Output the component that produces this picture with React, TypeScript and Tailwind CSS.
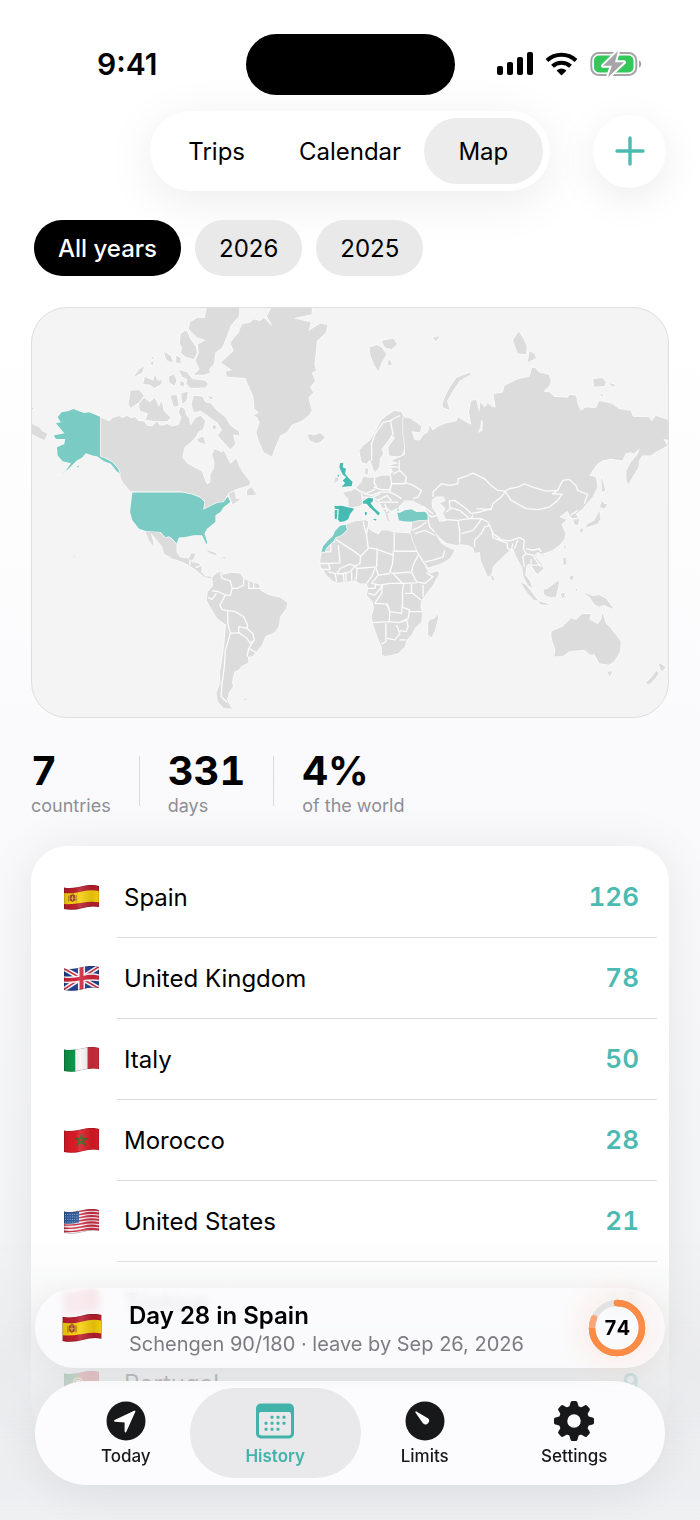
import { Fragment, useId, useState } from 'react'
import type { ReactNode } from 'react'
import clsx from 'clsx'

type Country = { code: string; name: string; days: number }

const countries: Country[] = [
  { code: 'ES', name: 'Spain', days: 126 },
  { code: 'GB', name: 'United Kingdom', days: 78 },
  { code: 'IT', name: 'Italy', days: 50 },
  { code: 'MA', name: 'Morocco', days: 28 },
  { code: 'US', name: 'United States', days: 21 },
  { code: 'TR', name: 'Türkiye', days: 19 },
  { code: 'PT', name: 'Portugal', days: 9 },
]

const stats = [
  { value: '7', label: 'countries' },
  { value: '331', label: 'days' },
  { value: '4%', label: 'of the world' },
]

const views = ['Trips', 'Calendar', 'Map']
const years = ['All years', '2026', '2025']

// One horizontal band of a waving flag
function Band({ y, h, color }: { y: number; h: number; color: string }) {
  return (
    <path
      d={`M-1 ${y + 3} Q8 ${y + 4.5} 18 ${y + 1.8} T36 ${y + 1.5} V${y + h + 1.5} Q28 ${y + h} 18 ${y + h + 1.8} T-1 ${y + h + 3}Z`}
      fill={color}
    />
  )
}

const flagArt: Record<string, ReactNode> = {
  ES: (
    <>
      <Band y={-1} h={24} color="#b81f2c" />
      <Band y={4.8} h={11.2} color="#f7cf0d" />
      <path d="M6 10h5v5.5l-2.5 1.5L6 15.5z" fill="#a8452c" />
      <path d="M7.3 8.4h2.6v1.4H7.3zM4.4 10.5h1v6h-1zM11.6 10.2h1v6h-1z" fill="#9a6a2c" />
      <path d="M8.5 11v4.5M6.7 13.2h3.6" stroke="#e8b94a" strokeWidth=".8" />
    </>
  ),
  GB: (
    <>
      <Band y={-1} h={24} color="#22408f" />
      <path d="M-1 2 36 23M-1 24 36 0" stroke="#fff" strokeWidth="4.6" />
      <path d="M-1 2 36 23M-1 24 36 0" stroke="#cf2840" strokeWidth="1.5" />
      <path d="M17.5 0v25" stroke="#fff" strokeWidth="7" />
      <Band y={7} h={7} color="#fff" />
      <path d="M17.5 0v25" stroke="#d3243c" strokeWidth="4" />
      <Band y={8.5} h={4} color="#d3243c" />
    </>
  ),
  IT: (
    <>
      <path d="M0 0h11.5v25H0z" fill="#10944a" />
      <path d="M11.5 0h12v25h-12z" fill="#f8f8f8" />
      <path d="M23.5 0H36v25H23.5z" fill="#cf2c3c" />
    </>
  ),
  MA: (
    <>
      <Band y={-1} h={24} color="#da1a26" />
      <path d="m17.2 6.8 3.3 9.8-8.6-6h10.600l-8.700 6z" fill="none" stroke="#3d5f21" strokeWidth="1.3" />
    </>
  ),
  US: (
    <>
      <Band y={-1} h={24} color="#f7f3f4" />
      {[-0.8, 2.4, 5.6, 8.8, 12, 15.2, 18.4].map((y) => (
        <Band key={y} y={y} h={1.7} color="#cf2f45" />
      ))}
      <path d="M0 2.5q7 1.5 15-.5v11.500q-8 2-15 1z" fill="#2f5c9c" />
      <path d="M1 5.500h13M1 8h13M1 10.500h13M1 13h13" stroke="#a8c3e3" strokeWidth=".9" strokeDasharray="1 1.3" />
    </>
  ),
  TR: (
    <>
      <Band y={-1} h={24} color="#e2152c" />
      <circle cx="13" cy="12.5" r="5.5" fill="#fff" />
      <circle cx="14.6" cy="12.5" r="4.4" fill="#e2152c" />
      <circle cx="20" cy="12.2" r="1.8" fill="#fff" />
    </>
  ),
  PT: (
    <>
      <path d="M0 0h14v25H0z" fill="#1d7d3c" />
      <path d="M14 0h22v25H14z" fill="#d8242c" />
      <circle cx="14" cy="11.5" r="4.5" fill="none" stroke="#f1d64a" strokeWidth="1.6" />
      <path d="M11.8 9h4.4v3.500L14 14.800l-2.200-2.300z" fill="#f6e9e9" />
    </>
  ),
}

function Flag({ code, className }: { code: string; className: string }) {
  const id = useId()
  return (
    <svg viewBox="0 0 35 25" className={className} aria-hidden="true">
      <defs>
        <clipPath id={`${id}c`}>
          <path d="M0 2.500Q8 4 18 1.300T35 1V22Q27 20.500 18 23.200T0 24Z" />
        </clipPath>
        <linearGradient id={`${id}g`}>
          <stop offset="0" stopColor="#000" stopOpacity=".12" />
          <stop offset=".25" stopColor="#000" stopOpacity="0" />
          <stop offset=".45" stopColor="#fff" stopOpacity=".12" />
          <stop offset=".8" stopColor="#000" stopOpacity=".1" />
          <stop offset="1" stopColor="#000" stopOpacity=".02" />
        </linearGradient>
      </defs>
      <g clipPath={`url(#${id}c)`}>
        {flagArt[code]}
        <path d="M0 0h35v25H0z" fill={`url(#${id}g)`} />
        <path d="M0 2.500Q8 4 18 1.300T35 1V22Q27 20.500 18 23.200T0 24Z" fill="none" stroke="#000" strokeOpacity=".25" />
      </g>
    </svg>
  )
}

// Land is drawn region by region; each group has its own origin
function WorldMap() {
  return (
    <svg viewBox="0 0 1914 1230" className="block w-full" role="img" aria-label="World map of visited countries">
      <g fill="#dcdcdd" stroke="#fbfbfc" strokeWidth="4" strokeLinejoin="round" paintOrder="stroke">
        {/* North America */}
        <g transform="translate(-3 -21)">
          <path d="M208 350 235 362 245 352 265 346 275 352 290 345 300 352 315 350 322 360 340 362 350 375 365 377 380 362 385 372 395 375 410 370 425 378 445 372 452 350 445 335 450 318 462 325 468 345 475 352 480 375 495 352 510 345 524 360 518 385 505 393 495 410 480 425 462 440 455 470 470 488 490 500 515 512 522 535 530 552 540 545 540 520 550 505 552 485 545 462 552 445 575 455 580 450 590 470 600 490 618 475 625 495 640 520 660 545 655 555 620 565 600 575 587 590 590 605 575 608 560 612 545 622 522 630 518 610 505 595 480 584 455 573 300 573 275 545 268 525 245 485 208 468Z" />
          <path d="M325 310 340 290 358 305 372 290 385 318 393 300 400 332 420 350 410 362 375 362 345 357 352 338 328 330Z" />
          <path d="M300 270 325 268 340 285 325 305 300 322 293 310Z" />
          <path d="M310 228 325 205 340 198 335 215ZM338 250 342 228 368 240 372 222 382 240 395 238 392 250 370 262 358 252ZM400 153 420 165 428 185 408 178ZM358 185l12-2-5 12zM362 168l10 2-6 5zM437 165l12 5 2 18-14-3zM415 228l15-8 8 20-6 14-15-8zM450 240l10 5v12l-12-4z" />
          <path d="M445 207 470 215 485 235 525 240 532 250 525 260 480 262 468 250 470 235 455 228Z" />
          <path d="M450 100 462 90 470 92 480 115 495 135 500 155 490 175 465 168 450 155 455 140 448 130Z" />
          <path d="M530 18H627L626 45 600 75 590 105 575 140 555 155 550 190 535 205 540 215 520 222H490L507 205 495 180 505 155 502 130 525 118 500 110 475 85 478 65 500 50 522 52Z" />
          <path d="M490 285 515 287 525 305 540 308 560 330 585 350 600 375 625 392 628 405 608 402 615 430 600 447 580 425 562 405 575 388 560 365 545 355 525 340 510 330 490 335 483 310ZM532 285l18 5-10 6z" />
          <path d="M500 415 518 408 526 430 505 425ZM420 285 438 282 445 315 430 318ZM452 278 472 272 468 300 455 310ZM548 372l10 5-4 10-8-5z" />
          <path d="M650 570 663 560 678 582 650 585ZM595 580 612 572 617 595 630 597 607 612Z" />
          <path d="M3 370 25 380 35 392 50 400 40 418 25 412 3 400ZM3 320l6 3-6 5z" />
          <path d="M75 368 90 365 80 350 92 335 110 332 128 325 145 332 160 337 175 335 208 348V468L225 475 245 485 262 505 268 520 258 512 240 490 220 482 200 468 185 465 165 458 155 470 138 480 110 508 85 525 105 510 120 488 95 482 80 465 78 440 100 430 103 415 75 415 68 405 100 398 85 380ZM138 497l8-2-4 7z" fill="#79cbc4" />
        </g>
        {/* Lower 48, Central and South America */}
        <g transform="translate(-3 519)">
          <path d="M345 152 390 155 405 172 415 168 438 190 438 215 450 232 475 235 482 220 495 220 490 235 480 245 505 250 515 258 512 275 525 288 545 290 540 295 520 290 500 272 480 258 455 245 425 235 400 220 395 200 375 175 360 158 368 185 370 200 355 180 345 155Z" />
          <path d="M305 36H455L485 42 510 52 522 65 518 88 545 75 560 68 580 65 592 48 600 65 580 80 570 95 555 105 555 125 530 145 522 160 530 185 528 193 515 165 490 165 465 170 445 172 438 190 425 175 415 168 405 172 390 155 345 152 325 145 305 120 298 95Z" fill="#79cbc4" />
          <path d="M525 208 555 218 560 226 540 220ZM572 230l18 3-8 3zM128 227l6 1-3 4zM640 657l10 0-4 5z" strokeWidth="2" />
          <path d="M545 292 560 278 572 275 577 284 600 278 630 280 640 295 660 305 685 312 692 332 715 345 750 352 772 368 768 385 750 410 745 440 735 455 705 470 695 495 675 520 665 530 652 530 655 548 635 558 625 570 612 575 605 605 608 620 595 640 590 660 600 680 608 687 580 685 562 665 558 640 570 610 568 580 575 540 582 490 587 435 560 415 545 390 528 360 532 335 548 318Z" />
          <path
            d="M570 278 575 295 600 302 605 325 620 325 640 315 640 295M605 325 600 345 585 345 565 335 545 332M585 345 568 375 575 388 592 392 615 395 640 410 652 435 650 445 625 440 625 458 600 460 592 430V392M625 458 650 475 660 490 672 480 668 462 650 445M672 480 655 505 650 530M655 505 678 518M600 460 585 510 582 560 575 610 572 650 590 668M655 305V325H690M670 308V325M532 352 545 358 558 340M478 238V255M495 262 512 256"
            fill="none"
          />
        </g>
        {/* Greenland, Iceland, Svalbard, Scandinavia */}
        <g transform="translate(567 -21)">
          <path d="M75 232 20 228 15 212 35 208 2 185 12 175 40 150 30 125 55 95 65 70 90 65 100 55 120 60 130 50 158 78 140 45 155 18H275V40L220 52 272 65 265 90 300 68 322 72 318 95 290 120 288 150 283 190 288 210 275 215 285 240 270 260 280 275 265 290 275 330 268 342 245 360 215 372 200 395 180 405 165 440 155 468 130 455 115 420 108 395 118 365 110 350 100 345 115 335 102 325 100 290 85 255Z" />
          <path d="M262 403 272 400 280 405 300 397 315 410 300 425 285 428 268 418ZM448 140 470 132 485 140 500 160 485 185 475 212 462 190 452 165ZM485 120 520 112 532 130 515 145 495 140ZM503 180l8-2 5 12-10 5z" />
          <path d="M418 450 425 485 440 490 450 478 458 500 465 515 478 500 480 475 490 460 485 445 505 420 515 403 525 412 505 440 508 465 530 468 545 465 557 440 552 350 545 335 525 330 500 345 485 358 470 385 450 420 430 435Z" />
          <path d="M455 480V430L465 400 490 365 512 360 520 405M512 360 525 352 540 345" fill="none" />
          <path d="M437 502l8 3-2 18-8-5zM345 530H355V542L342 548Z" />
          <path d="M360 488 370 487 368 500 378 505 375 520 388 535 398 545 395 557 365 560 375 548 368 540 378 530 368 522 362 510 358 500ZM352 522l6 2-4 6z" fill="#45bbb1" />
        </g>
        {/* Eurasia */}
        <g transform="translate(1197 -21)">
          <path d="M-80 350-60 352-25 378-30 395-55 392-45 418-30 420-18 402-5 395 0 372 8 390 25 378 50 368 80 362 85 350 110 365 125 372 118 335 125 300 140 297 145 320 155 355 152 380 145 397 158 390 160 365 148 345 152 305 165 320 175 308 190 320 198 320 192 280 220 275 225 255 260 238 280 232 300 228 308 200 318 202 330 215 358 222 365 240 360 255 342 272 362 275 375 288 415 290 420 282 440 285 445 310 455 330 470 320 500 322 510 300 550 310 570 325 605 330 612 348 660 350 668 362 680 345 720 358V418L703 415 715 435 680 455 665 465 640 465 630 480 628 500 610 530 598 552 592 540 592 510 605 485 625 462 632 443 615 460 605 455 590 458 580 480 545 475 520 480 505 490 480 525 500 530 505 560 490 590 470 612 460 625 440 640 450 662 445 675 435 672 432 655 422 648 415 632 390 650 412 658 397 672 408 700 405 717 390 735 370 750 345 758 335 762 325 755 315 765 335 790 342 805 325 822 318 815 308 800 297 790 290 800 288 825 300 840 310 865 295 855 282 830 278 800 268 785 258 765 252 745 235 755 225 765 190 800 185 825 175 830 168 815 155 785 150 755 135 758 130 742 115 735 90 732 80 735 50 728 30 712 15 695 25 715 35 730 55 742 75 750 60 775 35 790-5 803-20 780-45 740-60 700-55 690-52 662-90 660-97 640-60 628-40 632-7 635-20 618-45 605-50 600-75 600-92 618-98 630-115 635-128 640-120 665-128 660-135 635-145 622-152 612-170 595-200 610-215 618-230 620-245 620-245 595-262 578-235 570-218 558-205 545-200 528-180 532-165 532-145 525-118 525-112 508-122 495-95 488-115 480-90 470-75 462-74 440-80 400Z" />
          <path d="M8 600 20 590 40 590 45 600 28 608 45 625 38 640 48 660 30 662 22 640 8 620Z" fill="#f4f4f5" />
          <path
            d="M10 590 10 575 20 565 35 550 60 555 85 550V535L110 527 130 518 165 535 185 555 205 570 228 572 240 565 265 560 285 550 310 560 350 572 385 570 400 540 420 537 440 555 445 570 475 582 465 610M228 572 215 590 190 610 185 628 140 625M228 575 245 600 290 625 325 628 360 620 385 600 398 582 370 580 385 570M58 600 62 625 50 635M58 602 75 600 110 625 125 640 150 635 185 625M62 622 90 630 120 655 140 655M48 658 85 660 118 655M85 660 90 690V730M95 700 130 690 150 665 155 655 125 655 130 645M135 740V720L155 700 165 680 180 675 175 665 155 655M180 675 190 700 215 718 240 722 270 712 285 720M188 700 190 712 230 728M232 725 235 745 245 750 250 730M255 745 265 720M285 720 282 745 290 760 280 770 285 800M290 745 310 750 330 745 335 755M290 760 310 765 320 780 335 800M305 775V795H335M425 645 445 630M432 655 445 655M-7 650 0 680 15 695M-52 690-30 680-10 665M-45 700-15 690 15 705M-15 785 10 780 40 770 45 750M-20 618 10 640M-7 640 5 650 22 645M-7 635V655"
            fill="none"
          />
          <path d="M125 215 122 222 90 240 70 270 52 300 60 328 40 320 38 310 45 290 60 260 80 232 110 220ZM268 92 280 110 292 135 290 160 265 158 250 118ZM300 152l15 5 5 15-25 12zM492 235 520 232 530 245 525 256 495 258ZM540 247l18 5-3 6-12-5zM510 280l12 2-2 5zM10 108l8 2 12-5-12 17z" />
        </g>
        {/* Europe borders, Africa */}
        <g transform="translate(807 399)">
          <path
            d="M160 140 185 155 188 180 190 190M188 152 195 160 220 150 230 140 222 125 225 112M222 140 245 148 270 148 275 130 272 105M275 130 315 130 320 110 300 90 280 100M265 90 280 95M268 78 298 80M298 60V90M275 130 270 155 290 165 305 175M315 125 340 135 365 150 355 170 340 175M195 160 215 165 240 155 270 155M188 170 215 172 240 160M215 172 235 180 262 165M240 185 265 185 295 185M245 205 262 205 275 215 292 205M262 165 275 182M235 180 245 205M255 190 262 215"
            fill="none"
          />
          <path d="M137 253 165 243 195 240 205 243 203 262 215 272 235 282 245 270 260 270 285 277 320 278 332 280 335 295 345 320 355 345 375 375 388 400 415 393 418 400 400 435 380 460 365 480 362 500 368 520 365 545 345 565 335 585 320 600 315 620 295 640 275 645 255 648 247 645 245 620 232 590 220 555 215 530 222 505 218 485 200 465 205 445 200 430 180 430 165 420 140 425 110 428 95 420 80 405 62 380 60 365 65 335 72 320 105 275Z" />
          <path
            d="M68 335H92V308L105 303M115 315 120 368 85 370M108 298 165 335 182 348 205 325 200 285 192 255 190 243M203 262 200 280M205 322 225 325 280 345 280 332M283 277V333H352M280 345 278 370 270 395 280 400 335 395M182 348 180 370 165 378 170 385 230 380 232 325M168 420 172 385M225 385 215 410 200 430M228 382 235 405 270 400M235 405 215 430 240 435 270 430 308 430 280 400M355 345 340 375 335 395 350 425 375 430 400 410 380 398M308 430 350 428M248 432 245 460 225 490 260 492 270 515 305 520 308 490V450L312 432M315 460 340 460 363 480M370 435V470M335 432V460M262 490 270 515 268 545 215 548M268 545 298 548 325 535 330 510 305 500M325 515H366M258 550V605L245 612M262 595 285 600 300 580 290 555M298 548 320 540 325 560 318 575 300 572M298 600 318 600M60 370 85 370 90 388 62 388M85 395 105 400 110 425M110 402 130 400 132 425M130 400 150 395 165 378 150 372 120 385 110 402M138 400V425M155 395V422M200 445H225L228 430M205 460 225 465 245 440"
            fill="none"
          />
          <path d="M385 550 390 540 405 535 413 522 415 535 405 575 395 592 385 585Z" />
          <g fill="#45bbb1">
            <path d="M103 197 125 196 163 205 150 222 145 236 134 243 120 245 114 238 116 207 104 205ZM104 209H112L110 237 104 236Z" />
            <path d="M188 183 205 172 220 174 218 184 212 188 222 202 240 218 235 226 225 215 208 200 200 190 190 190ZM218 236l12-1-2 6zM195 214l6 2-1 9-5-1z" />
          </g>
          <g fill="#79cbc4">
            <path d="M120 256 137 253 141 268 125 284 106 292 101 302 90 312 78 325 74 335 64 334 69 318 82 303 98 288 105 272Z" />
            <path d="M292 217 300 217 315 210 335 207 350 215 375 214 383 222 384 238 355 240 335 244 310 243 297 240ZM292 207l7 1-5 5z" />
          </g>
        </g>
        {/* East Asian islands and Oceania */}
        <g transform="translate(1197 459)">
          <path d="M515 50 522 65 528 90 518 95 517 70ZM518 120 525 130 535 132 525 145 512 140ZM510 150 514 175 505 190 485 197 468 202 474 191 494 181 504 165ZM451 206l11-2-2 11-7 2zM404 260l6-6-3 17zM402 293l9-1v21l-9 0zM419 350l14-4-2 15-8-4zM185 344l7 6 2 10-7 0z" />
          <path d="M272 365 290 375 310 400 326 422 313 420 295 400ZM325 423 345 428 364 434 335 434ZM342 390 355 385 375 370 385 362 390 370 385 385 380 410 365 412 345 405ZM395 400l16-3-7 8 7 9-9-4-3 8zM438 388l6-3-1 8z" />
          <path d="M462 398l15 4L490 408 510 405 530 415 545 435 555 447 540 442 525 435 510 440 495 432 482 412ZM512 406V440M340 285l6-2-2 7z" />
          <path d="M365 520 370 512 400 500 425 475 440 480 458 462 485 462 480 478 505 492 515 480 520 458 530 490 545 505 560 525 575 545 573 575 555 605 540 615 510 610 495 582 485 585 465 570 440 572 420 575 400 588 375 590 378 570 368 540ZM534 635h16l-8 16z" />
          <path d="M690 612l9 2 11 8-11 13-6-8zM649 670 670 650 682 633 689 640 676 660 660 674Z" />
        </g>
      </g>
    </svg>
  )
}

function StatusIcons() {
  return (
    <svg viewBox="0 0 148 28" className="h-7 w-[148px]" aria-hidden="true">
      <rect x="1" y="16" width="6" height="9" rx="2" />
      <rect x="11" y="12" width="6" height="13" rx="2" />
      <rect x="21" y="7" width="6" height="18" rx="2" />
      <rect x="31" y="2" width="6" height="23" rx="2" />
      <g fill="none" stroke="#000" strokeWidth="4">
        <path d="M51 10.500a21 21 0 0 1 29 0" />
        <path d="M56.500 16.300a13 13 0 0 1 18 0" />
      </g>
      <path d="M60.500 20.500a8 8 0 0 1 10 0L65.500 25.500z" />
      <rect x="95.300" y="3" width="45" height="22" rx="7.500" fill="none" stroke="#a5a5a8" strokeWidth="2" />
      <rect x="98" y="5.500" width="39.500" height="17" rx="5" fill="#34c759" />
      <path d="M143 10.500c3 .8 3 6.200 0 7z" fill="#a5a5a8" />
      <path d="M122 1 107 15.800h8.800l-3.800 11.500L128 12.300h-9z" fill="#a5a5a8" stroke="#fff" strokeWidth="4" strokeLinejoin="round" paintOrder="stroke" />
    </svg>
  )
}

function TodayIcon() {
  return (
    <svg viewBox="0 0 40 40" className="size-10" aria-hidden="true">
      <circle cx="20" cy="20" r="19.500" fill="currentColor" />
      <path d="M9 19.800 28.500 10.500 19.500 30.500V20.500z" fill="#fff" stroke="#fff" strokeWidth="1.800" strokeLinejoin="round" />
    </svg>
  )
}

function HistoryIcon() {
  const dots = [[17, 16], [23, 16], [29, 16], [11, 22], [17, 22], [23, 22], [29, 22], [11, 28], [17, 28], [23, 28]]
  return (
    <svg viewBox="0 0 40 40" className="size-10" fill="currentColor" aria-hidden="true">
      <path fillRule="evenodd" d="M6 2.500h28a5 5 0 0 1 5 5v25a5 5 0 0 1-5 5H6a5 5 0 0 1-5-5v-25a5 5 0 0 1 5-5zM6 11a2 2 0 0 0-2 2v19a2.500 2.500 0 0 0 2.500 2.500h27a2.500 2.500 0 0 0 2.500-2.500V13a2 2 0 0 0-2-2z" />
      {dots.map(([x, y]) => (
        <rect key={`${x}-${y}`} x={x - 1.5} y={y - 1.2} width="3" height="3" rx="1" />
      ))}
    </svg>
  )
}

function LimitsIcon() {
  return (
    <svg viewBox="0 0 40 40" className="size-10" aria-hidden="true">
      <circle cx="20" cy="20" r="19.500" fill="currentColor" />
      <path d="M11 11 22.500 17.800a2.800 2.800 0 0 1-4 4z" fill="#fff" stroke="#fff" strokeWidth="1.400" strokeLinejoin="round" />
    </svg>
  )
}

function SettingsIcon() {
  return (
    <svg viewBox="0 0 40 40" className="size-10" fill="currentColor" aria-hidden="true">
      <circle cx="20" cy="20" r="11" fill="none" stroke="currentColor" strokeWidth="8.500" />
      {[0, 45, 90, 135, 180, 225, 270, 315].map((angle) => (
        <path key={angle} d="M15 7 16.500 1.500Q16.800 0 18.200 0h3.600q1.400 0 1.700 1.500L25 7z" transform={`rotate(${angle} 20 20)`} />
      ))}
    </svg>
  )
}

const tabs = [
  { name: 'Today', Icon: TodayIcon },
  { name: 'History', Icon: HistoryIcon },
  { name: 'Limits', Icon: LimitsIcon },
  { name: 'Settings', Icon: SettingsIcon },
]

function LimitRing({ value }: { value: number }) {
  return (
    <div className="grid size-[58px] place-items-center rounded-full shadow-[0_0_28px_10px_rgba(255,140,70,0.1)]">
      <svg viewBox="0 0 58 58" className="col-start-1 row-start-1 size-[58px] -rotate-90" fill="none" strokeWidth="6.500" aria-hidden="true">
        <circle cx="29" cy="29" r="25" stroke="#e4e2e2" />
        <circle cx="29" cy="29" r="25" stroke="#f9a676" strokeLinecap="round" strokeDasharray="127 158" />
        <circle cx="29" cy="29" r="25" stroke="#fb8b45" strokeDasharray="117 158" />
        <circle cx="54" cy="29" r="3.250" fill="#fb8b45" />
      </svg>
      <span className="col-start-1 row-start-1 text-xl font-bold tabular-nums">{value}</span>
    </div>
  )
}

export default function App() {
  const [view, setView] = useState('Map')
  const [year, setYear] = useState('All years')
  const [tab, setTab] = useState('History')

  return (
    <div className="min-h-screen bg-linear-to-b from-white from-20% via-[#fafafc] via-50% to-[#f1f2f4] pb-[86px] font-['Inter','Liberation_Sans',sans-serif] text-black">
      {/* Status bar */}
      <div className="grid h-[111px] grid-cols-[1fr_auto_1fr] items-center px-[56px] pt-[17px]">
        <span className="pl-[41px] text-[30px] font-semibold">9:41</span>
        <div className="h-[61px] w-[209px] rounded-full bg-black" />
        <div className="flex justify-end">
          <StatusIcons />
        </div>
      </div>

      <header className="grid grid-cols-[1fr_auto_1fr] items-center px-[34px]">
        <nav className="col-start-2 grid h-20 w-[400px] grid-cols-3 items-center rounded-full bg-white shadow-[0_10px_50px_rgba(0,0,0,0.08)]">
          {views.map((name) => (
            <button
              key={name}
              type="button"
              onClick={() => setView(name)}
              className={clsx('mx-[7px] h-[66px] rounded-full pt-0.5 text-2xl', view === name && 'bg-[#ececed]')}
            >
              {name}
            </button>
          ))}
        </nav>
        <button
          type="button"
          aria-label="Add trip"
          className="grid size-[73px] place-items-center justify-self-end rounded-full bg-white text-[#4dbab1] shadow-[0_10px_40px_rgba(0,0,0,0.08)]"
        >
          <svg viewBox="0 0 30 30" className="size-[30px]" stroke="currentColor" strokeWidth="3.400" strokeLinecap="round" aria-hidden="true">
            <path d="M15 2v26M2 15h26" />
          </svg>
        </button>
      </header>

      <main className="px-[31px]">
        <div className="mt-[29px] flex gap-[14px] px-[3px]">
          {years.map((name) => (
            <button
              key={name}
              type="button"
              onClick={() => setYear(name)}
              className={clsx('h-14 rounded-full px-6 pt-0.5 text-2xl', year === name ? 'bg-black font-medium text-white' : 'bg-[#e9e9ea]')}
            >
              {name}
            </button>
          ))}
        </div>

        <section className="mt-[31px] overflow-hidden rounded-[36px] border border-[#dededf] bg-[#f4f4f5]">
          <WorldMap />
        </section>

        <dl className="mt-[33px] flex">
          {stats.map((stat, i) => (
            <Fragment key={stat.label}>
              {i > 0 && <div className="mx-7 mt-[5px] h-[50px] w-px bg-[#dadadc]" aria-hidden="true" />}
              <div className="flex flex-col-reverse gap-[3px]">
                <dt className="text-lg leading-6 text-[#8e8e93]">{stat.label}</dt>
                <dd className="text-[40px] leading-10 font-bold tabular-nums">{stat.value}</dd>
              </div>
            </Fragment>
          ))}
        </dl>

        <ul className="mt-[28px] rounded-[36px] bg-white py-[11px] shadow-[0_4px_50px_rgba(0,0,0,0.08)]">
          {countries.map((country, i) => (
            <li key={country.code} className="flex h-[81px] items-center pl-[33px]">
              <Flag code={country.code} className="h-[25px] w-[35px]" />
              <div
                className={clsx(
                  'mr-3 ml-[18px] flex h-full grow items-center justify-between border-b pt-0.5 pr-[18px] pl-[7px] text-2xl',
                  i < countries.length - 1 ? 'border-[#dcdcde]' : 'border-transparent',
                )}
              >
                <span>{country.name}</span>
                <span className="text-[26px] font-semibold text-[#4dbab1] tabular-nums">{country.days}</span>
              </div>
            </li>
          ))}
        </ul>
      </main>

      {/* Floating bars over the list */}
      <div className="fixed inset-x-0 bottom-0 bg-linear-to-b from-transparent via-[#e8e9eb]/80 via-45% to-[#eeeff1]/95 px-[35px] pt-12 pb-[35px]">
        <div className="flex h-20 items-center rounded-full bg-[#fcfcfe]/85 px-[27px] shadow-[0_4px_30px_rgba(0,0,0,0.05)] backdrop-blur-xs">
          <Flag code="ES" className="h-[28px] w-[40px]" />
          <div className="ml-[27px] grow pt-1">
            <h2 className="text-2xl leading-7 font-semibold">Day 28 in Spain</h2>
            <p className="text-xl leading-7 text-[#7c7c80]">Schengen 90/180 · leave by Sep 26, 2026</p>
          </div>
          <div className="-mr-2">
            <LimitRing value={74} />
          </div>
        </div>

        <nav className="mt-[13px] grid h-[104px] grid-cols-4 items-center rounded-full bg-[#fcfcfe] px-4 shadow-[0_8px_40px_rgba(0,0,0,0.08)]">
          {tabs.map(({ name, Icon }) => (
            <a
              key={name}
              href={`#${name.toLowerCase()}`}
              onClick={() => setTab(name)}
              aria-current={tab === name ? 'page' : undefined}
              className={clsx(
                '-mx-[11px] flex h-[90px] flex-col items-center justify-center gap-[3px] rounded-full pt-[3px]',
                tab === name ? 'bg-[#e9e9eb] text-[#42b3aa]' : 'text-[#17181a]',
              )}
            >
              <Icon />
              <span className={clsx('text-[17px] leading-6', tab === name ? 'font-semibold' : 'font-medium')}>{name}</span>
            </a>
          ))}
        </nav>
      </div>
    </div>
  )
}
